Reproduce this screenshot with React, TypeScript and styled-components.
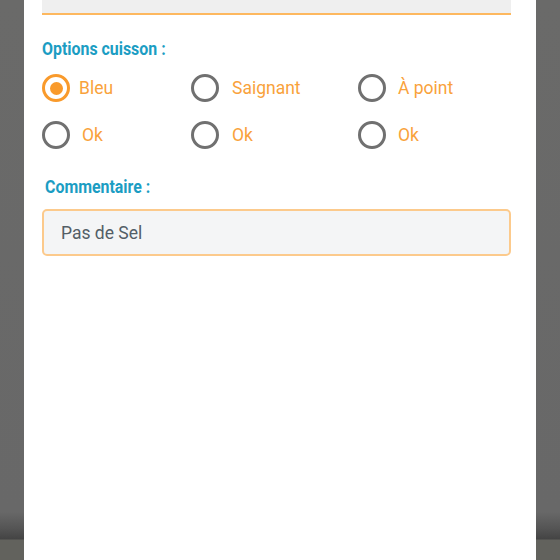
import styled, { createGlobalStyle } from "styled-components";
import { useState } from "react";

const GlobalStyle = createGlobalStyle`
  html, body {
    margin: 0;
    padding: 0;
  }
  body {
    font-family: "Roboto", "Liberation Sans", sans-serif;
  }
`;

const Screen = styled.div`
  width: 560px;
  height: 560px;
  overflow: hidden;
  display: flex;
  justify-content: center;
  background: linear-gradient(
    to bottom,
    #6a6a69 0px,
    #686868 512px,
    #555555 528px,
    #444444 539px,
    #62625d 540px,
    #62625d 560px
  );
`;

const Panel = styled.div`
  width: 512px;
  height: 560px;
  background: #ffffff;
  box-sizing: border-box;
  padding: 0 25px 0 18px;
  display: flex;
  flex-direction: column;
`;

const TopField = styled.div`
  height: 13px;
  background: #efefef;
  border-bottom: 2px solid #fdb85f;
`;

const SectionTitle = styled.div<{ $indent?: number; $top: number }>`
  font-family: "Roboto", "Liberation Sans", sans-serif;
  font-weight: 700;
  font-size: 18.5px;
  line-height: 22px;
  color: #1b9dc3;
  margin-top: ${(p) => p.$top}px;
  margin-left: ${(p) => p.$indent ?? 0}px;
  transform: scaleX(0.86);
  transform-origin: left center;
  white-space: nowrap;
`;

const OptionsGrid = styled.div`
  display: grid;
  grid-template-columns: 149px 167px auto;
  row-gap: 19px;
  margin-top: 14px;
`;

const Option = styled.label<{ $gap: number }>`
  display: flex;
  align-items: center;
  gap: ${(p) => p.$gap}px;
  height: 28px;
  cursor: pointer;
`;

const RadioRing = styled.span<{ $checked: boolean }>`
  width: 28px;
  height: 28px;
  box-sizing: border-box;
  border-radius: 50%;
  border: 3px solid ${(p) => (p.$checked ? "#f99a2b" : "#707070")};
  display: flex;
  align-items: center;
  justify-content: center;
  flex-shrink: 0;

  &::after {
    content: "";
    width: 13px;
    height: 13px;
    border-radius: 50%;
    background: #f99a2b;
    display: ${(p) => (p.$checked ? "block" : "none")};
  }
`;

const OptionText = styled.span`
  font-size: 17.5px;
  color: #f9a23b;
  line-height: 20px;
`;

const CommentBox = styled.div`
  height: 47px;
  box-sizing: border-box;
  border: 2px solid #fcca8c;
  border-radius: 5px;
  background: #f4f5f6;
  display: flex;
  align-items: center;
  padding-left: 17px;
  font-size: 17.5px;
  color: #535e66;
  margin-top: 11px;
`;

const options = [
  { label: "Bleu", gap: 9 },
  { label: "Saignant", gap: 13 },
  { label: "À point", gap: 12 },
  { label: "Ok", gap: 12 },
  { label: "Ok", gap: 13 },
  { label: "Ok", gap: 12 },
];

function App() {
  const [selected, setSelected] = useState(0);
  return (
    <>
      <GlobalStyle />
      <Screen>
        <Panel>
          <TopField />
          <SectionTitle $top={23}>Options cuisson :</SectionTitle>
          <OptionsGrid>
            {options.map((o, i) => (
              <Option key={i} $gap={o.gap} onClick={() => setSelected(i)}>
                <RadioRing $checked={selected === i} />
                <OptionText>{o.label}</OptionText>
              </Option>
            ))}
          </OptionsGrid>
          <SectionTitle $top={27} $indent={3}>
            Commentaire :
          </SectionTitle>
          <CommentBox>Pas de Sel</CommentBox>
        </Panel>
      </Screen>
    </>
  );
}

export default App;
